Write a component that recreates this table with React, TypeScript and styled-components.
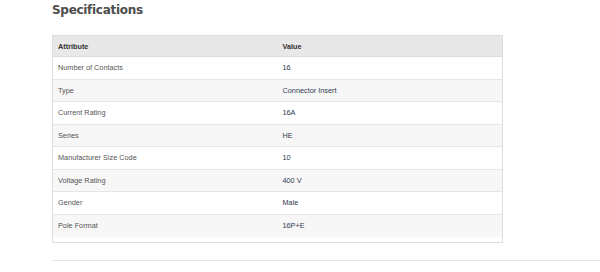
import styled, { createGlobalStyle } from "styled-components";

const GlobalStyle = createGlobalStyle`
  html, body {
    margin: 0;
    padding: 0;
    background: #fff;
  }
  body {
    font-family: "Liberation Sans", Arial, sans-serif;
  }
`;

const Page = styled.section`
  padding: 0 0 0 52px;
  width: 548px;
`;

const Title = styled.h2`
  margin: 0;
  font-family: "DejaVu Sans", "Lato", sans-serif;
  font-size: 12px;
  line-height: 20px;
  font-weight: 700;
  color: #4d4d4d;
  letter-spacing: -0.3px;
`;

const TableBox = styled.div`
  margin-top: 15px;
  width: 449px;
  border: 1px solid #dedede;
  padding-bottom: 5px;
  background: #fff;
`;

const Table = styled.table`
  width: 100%;
  border-collapse: collapse;
  table-layout: fixed;
  font-size: 7.3px;
`;

const HeadCell = styled.th`
  height: 20px;
  padding: 0 5px;
  text-align: left;
  font-weight: 700;
  color: #333;
  background: #e8e8e8;
  border-bottom: 1px solid #dcdcdc;
`;

const Row = styled.tr<{ $striped: boolean }>`
  height: 22.5px;
  background: ${(p) => (p.$striped ? "#f7f7f7" : "#fff")};
  border-bottom: 1px solid #e6e6e6;

  &:last-child {
    border-bottom: none;
  }
`;

const Cell = styled.td<{ $value?: boolean }>`
  padding: 0 5px;
  color: ${(p) => (p.$value ? "#2e3a52" : "#555")};
`;

const Divider = styled.hr`
  margin: 17px 0 0;
  border: none;
  border-top: 1px solid #e4e4e4;
  width: 548px;
`;

const specs: [string, string][] = [
  ["Number of Contacts", "16"],
  ["Type", "Connector Insert"],
  ["Current Rating", "16A"],
  ["Series", "HE"],
  ["Manufacturer Size Code", "10"],
  ["Voltage Rating", "400 V"],
  ["Gender", "Male"],
  ["Pole Format", "16P+E"],
];

const App = () => {
  return (
    <>
      <GlobalStyle />
      <Page>
        <Title>Specifications</Title>
        <TableBox>
          <Table>
            <thead>
              <tr>
                <HeadCell>Attribute</HeadCell>
                <HeadCell>Value</HeadCell>
              </tr>
            </thead>
            <tbody>
              {specs.map(([name, value], i) => (
                <Row key={name} $striped={i % 2 === 1}>
                  <Cell>{name}</Cell>
                  <Cell $value>{value}</Cell>
                </Row>
              ))}
            </tbody>
          </Table>
        </TableBox>
        <Divider />
      </Page>
    </>
  );
};

export default App;
